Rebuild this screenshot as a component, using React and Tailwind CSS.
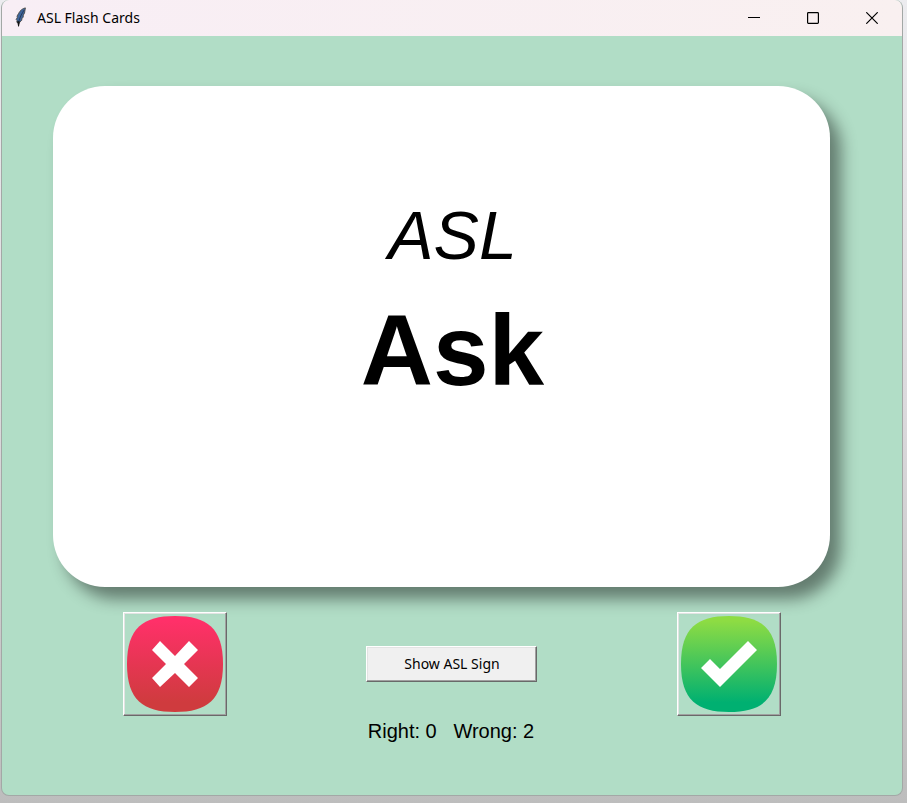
import React from "react";

function Feather() {
  return (
    <svg className="mb-0.5 h-5 w-3 shrink-0" viewBox="0 0 12 20" aria-hidden="true">
      <path d="M10.4 .9C7.8 1.3 5 3.4 3.6 6.4L2 9.2l.4 1L1.2 12.6l.9 1-.3 1.6L3.3 16l1.1-.2 1.4-1.8.9-.6.2-1.7 1.3-1.6.1-2 1.2-2L10.4.9Z" fill="#3d659c" stroke="#4a4744" strokeWidth=".9" />
      <path d="M9 3.2C7.2 6 5 9.6 3.600 15" fill="none" stroke="#23344f" strokeWidth=".9" />
      <path d="M2.2 14.2h2.4v2l-.6 3.3h-.8L2.600 16.500Z" fill="#151515" />
    </svg>
  );
}

function TitleBar() {
  const control = "flex h-9 w-[59px] items-center justify-center pb-px";
  return (
    <header className="flex h-9 items-center bg-linear-to-r from-[#f8eef5] to-[#f9f0f0] pr-px pl-[13px]">
      <Feather />
      <h1 className="ml-[10px] flex-1 font-['Noto_Sans',sans-serif] text-[14px] leading-5 text-black">
        ASL Flash Cards
      </h1>
      <button type="button" aria-label="Minimize" className={control}>
        <svg className="size-3" viewBox="0 0 12 12" shapeRendering="crispEdges">
          <path d="M0 5.5h12" stroke="#000" />
        </svg>
      </button>
      <button type="button" aria-label="Maximize" className={control}>
        <svg className="size-3" viewBox="0 0 12 12">
          <rect x=".6" y=".6" width="10.8" height="10.8" rx=".8" fill="none" stroke="#000" strokeWidth="1.2" />
        </svg>
      </button>
      <button type="button" aria-label="Close" className={control}>
        <svg className="size-3" viewBox="0 0 12 12">
          <path d="M.3 .3l11.4 11.4M11.7 .3L.3 11.7" stroke="#000" strokeWidth="1.2" />
        </svg>
      </button>
    </header>
  );
}

const raised =
  "border border-t-white border-l-white border-r-[#696969] border-b-[#696969] shadow-[inset_-1px_-1px_0_#a0a0a0,inset_1px_1px_0_#e3e3e3]";

function AnswerButton({ label, from, to, id, children }) {
  return (
    <button type="button" aria-label={label} className={`size-[104px] p-0.5 ${raised}`}>
      <svg className="size-full" viewBox="0 0 98 98">
        <defs>
          <linearGradient id={id} x1="0" y1="0" x2="0" y2="1">
            <stop offset="0.05" stopColor={from} />
            <stop offset="0.9" stopColor={to} />
          </linearGradient>
        </defs>
        <path
          d="M49 1C81 1 97 13 97 49S81 97 49 97 1 85 1 49 17 1 49 1Z"
          fill={`url(#${id})`}
        />
        {children}
      </svg>
    </button>
  );
}

export default function App() {
  return (
    <div className="flex min-h-screen bg-linear-to-b from-[#ececef] via-[#dcdadd] to-[#bdbdbd] pr-1 pb-[7px] pl-px font-['Liberation_Sans',Arial,sans-serif] text-black">
      <div className="flex flex-1 flex-col overflow-hidden rounded-lg border-x border-b border-[#a3a8a6] bg-[#b1ddc6]">
        <TitleBar />
        <main className="flex flex-1 flex-col pt-[50px]">
          <section className="mr-[72px] ml-[51px] flex h-[501px] flex-col items-center rounded-[52px] bg-white pt-[109px] pl-[22px] shadow-[11px_12px_16px_rgba(0,0,0,0.44)]">
            <p className="text-[68px] leading-[80px] italic">ASL</p>
            <p className="mt-[17px] text-[100px] leading-[116px] font-bold">Ask</p>
          </section>
          <div className="mt-[25px] grid grid-cols-3 place-items-center px-[34px]">
            <AnswerButton label="Wrong" id="wrong" from="#ff3069" to="#cf3b3e">
              <path d="M34 26L49 41 63 26 72 35 58 49 72 63 63 72 49 58 34 72 26 63 40 49 26 35Z" fill="#fff" />
            </AnswerButton>
            <button
              type="button"
              className={`h-9 w-[171px] bg-[#f0f0f0] font-['Noto_Sans',sans-serif] text-[14px] leading-5 ${raised}`}
            >
              Show ASL Sign
            </button>
            <AnswerButton label="Right" id="right" from="#8edc43" to="#00b071">
              <path d="M21 53L30 44 40 54 68 26 77 35 40 72Z" fill="#fff" />
            </AnswerButton>
          </div>
          <p className="mt-[3px] pr-0.5 text-center text-[20px] leading-6 whitespace-pre">
            {"Right: 0   Wrong: 2"}
          </p>
        </main>
      </div>
    </div>
  );
}
